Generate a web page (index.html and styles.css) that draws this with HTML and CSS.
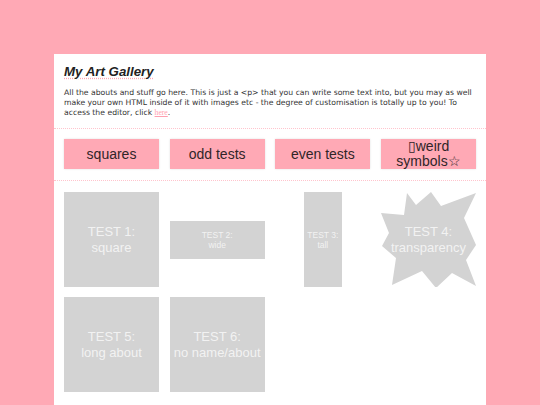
FILE: index.html
```html
<!DOCTYPE html>
<html lang="en">
<head>
    <meta charset="UTF-8">
    <meta name="viewport" content="width=device-width, initial-scale=1.0">
    <title>My Art Gallery</title>
    <link rel="stylesheet" href="styles.css">
</head>
<body>
    <div class="gallery">
        <div class="intro">
            <h1>My Art Gallery</h1>
            <p>All the abouts and stuff go here. This is just a &lt;p&gt; that you can write some text into, but you may as well make your own HTML inside of it with images etc - the degree of customisation is totally up to you! To access the editor, click <a href="#">here</a>.</p>
        </div>

        <nav class="filters">
            <button>squares</button>
            <button>odd tests</button>
            <button>even tests</button>
            <button>&#9647;weird symbols&#9734;</button>
        </nav>

        <div class="pieces">
            <div class="cell">
                <div class="art square">TEST 1:<br>square</div>
            </div>
            <div class="cell">
                <div class="art wide">TEST 2:<br>wide</div>
            </div>
            <div class="cell">
                <div class="art tall">TEST 3:<br>tall</div>
            </div>
            <div class="cell">
                <div class="star">
                    <svg viewBox="0 0 95 95" width="95" height="95">
                        <polygon points="26,1 35,13 50,0 60,14 95,1 83,26 95,53 85,68 95,94 71,81 55,96 41,79 11,93 15,66 1,54 8,41 0,21 23,23" fill="#d3d3d3"/>
                    </svg>
                    <span>TEST 4:<br>transparency</span>
                </div>
            </div>
            <div class="cell">
                <div class="art square">TEST 5:<br>long about</div>
            </div>
            <div class="cell">
                <div class="art square">TEST 6:<br>no name/about</div>
            </div>
        </div>
    </div>
</body>
</html>
```

FILE: styles.css
```css
body {
    margin: 0;
    padding: 0;
    background-color: #ffa9b5;
    font-family: 'Liberation Sans', Arial, sans-serif;
}
.gallery {
    width: 80%;
    margin: 54px auto 0;
    background: white;
    min-height: 360px;
}
.intro {
    padding: 10px 10px 10px;
}
.intro h1 {
    margin: 0;
    font-size: 13.3px;
    line-height: 16px;
    font-style: italic;
    font-weight: bold;
    color: #222;
    text-decoration: underline dotted #ffa9b5;
    text-underline-offset: 2px;
}
.intro p {
    margin: 8px 0 0;
    font-family: 'DejaVu Sans', Verdana, sans-serif;
    font-size: 7.7px;
    line-height: 10px;
    color: #333;
}
.intro a {
    font-family: 'Liberation Serif', serif;
    color: #ff9fb0;
}
.filters {
    display: grid;
    grid-template-columns: repeat(4, 95px);
    justify-content: space-between;
    padding: 10px 10px 11px;
    border-top: 1px dotted #ffc4cd;
    border-bottom: 1px dotted #ffc4cd;
}
.filters button {
    height: 30px;
    padding: 0;
    border: none;
    background: #ffa9b5;
    color: #302528;
    font-family: 'Liberation Sans', Arial, sans-serif;
    font-size: 14px;
    line-height: 15px;
    box-shadow: 0 0 2px rgba(0, 0, 0, 0.12);
}
.pieces {
    display: grid;
    grid-template-columns: repeat(4, 95px);
    grid-auto-rows: 95px;
    justify-content: space-between;
    row-gap: 10px;
    padding: 11px 10px 10px;
}
.cell {
    display: flex;
    align-items: center;
    justify-content: center;
}
.art {
    display: flex;
    align-items: center;
    justify-content: center;
    text-align: center;
    background: #d3d3d3;
    color: #f2f2f2;
    font-size: 13px;
    line-height: 16px;
}
.square {
    width: 95px;
    height: 95px;
}
.wide {
    width: 95px;
    height: 38px;
    font-size: 8.5px;
    line-height: 10px;
}
.tall {
    width: 38px;
    height: 95px;
    font-size: 8.5px;
    line-height: 10px;
}
.star {
    position: relative;
    width: 95px;
    height: 95px;
}
.star svg {
    display: block;
}
.star span {
    position: absolute;
    top: 0;
    left: 0;
    width: 95px;
    height: 95px;
    display: flex;
    align-items: center;
    justify-content: center;
    text-align: center;
    color: #f2f2f2;
    font-size: 13px;
    line-height: 16px;
}
```
